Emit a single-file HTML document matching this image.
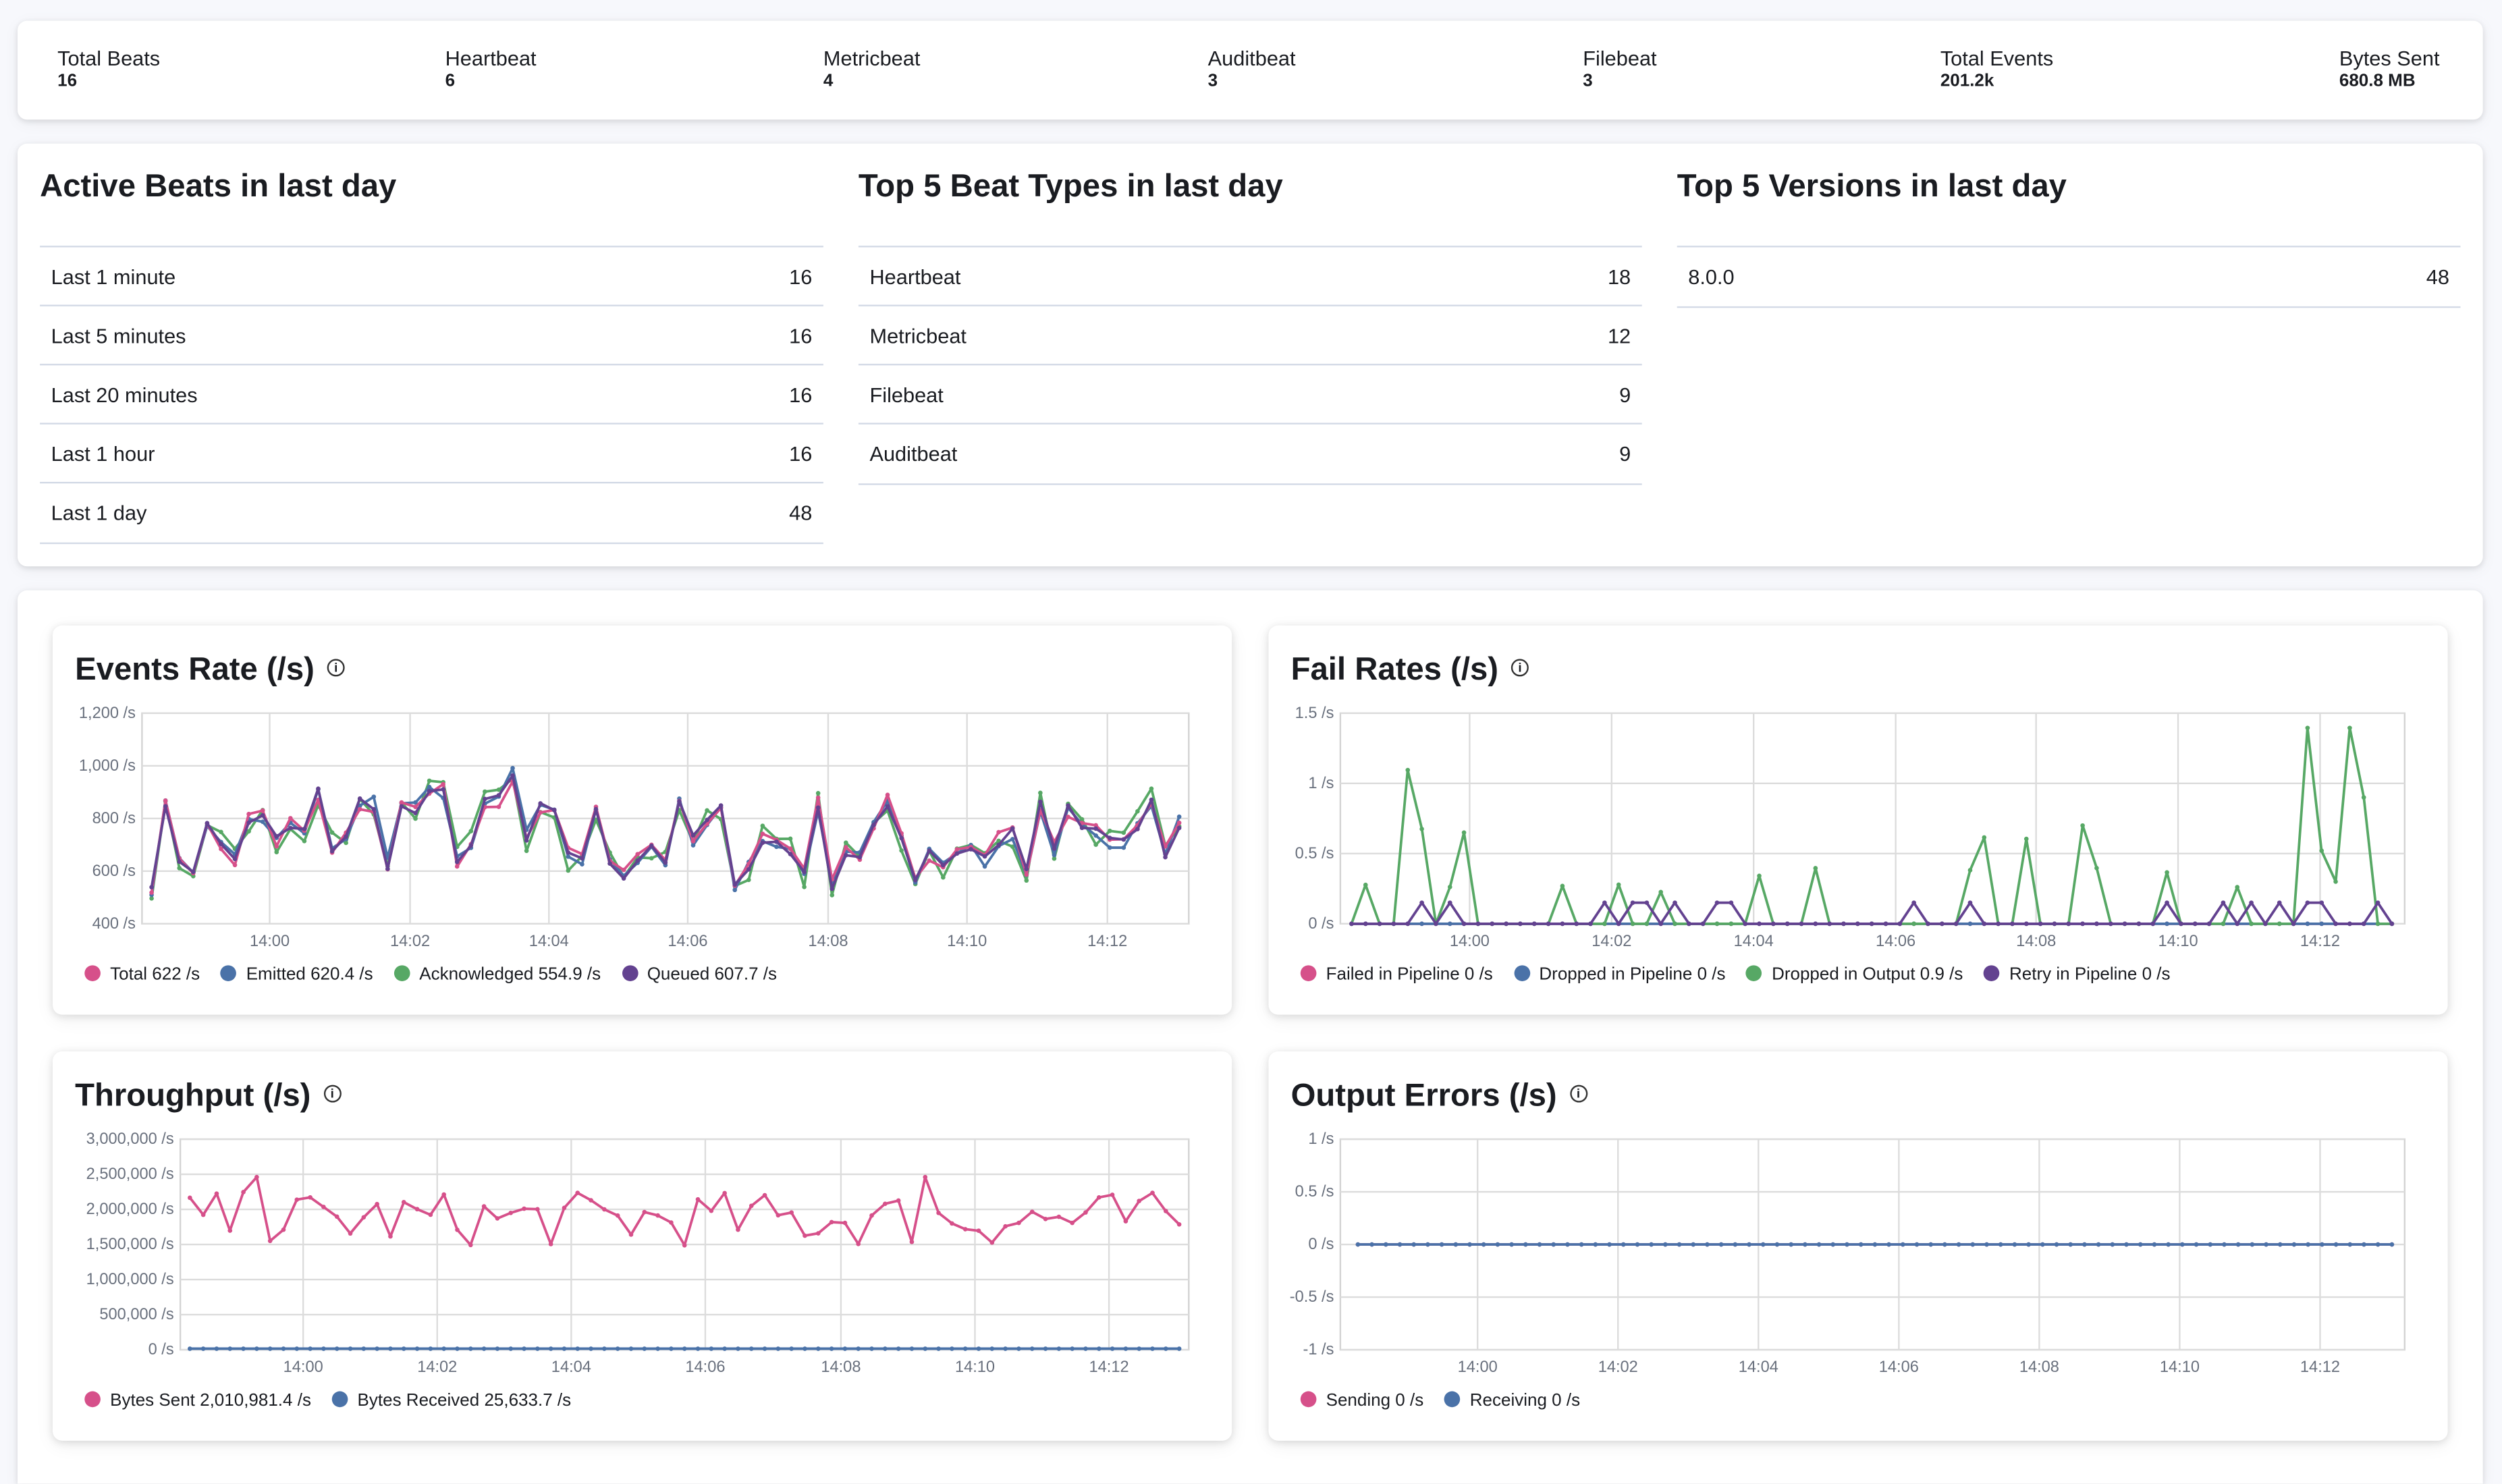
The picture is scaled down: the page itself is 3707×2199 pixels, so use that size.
<!DOCTYPE html>
<html><head><meta charset="utf-8">
<style>
html,body{margin:0;padding:0;width:3707px;height:2160px;overflow:hidden;background:#f7f8fc;}
#w{position:absolute;left:0;top:0;width:1568px;height:914px;transform:scale(2.36416);transform-origin:0 0;font-family:"Liberation Sans",sans-serif;color:#1a1c21;}
.p{position:absolute;background:#fff;border-radius:6px;box-shadow:0 1px 4px rgba(0,0,0,.12),0 2px 10px rgba(0,0,0,.05);}
.s{position:absolute;top:16px;font-size:13px;}
.s b{display:block;font-size:11px;margin-top:1px;}
.col{position:absolute;top:0;width:491px;}
.col h2{margin:0;position:absolute;top:106px;font-size:20px;font-weight:bold;white-space:nowrap;}
.row{position:absolute;left:0;right:0;height:37px;border-top:1px solid #d3dae6;font-size:13px;line-height:37px;}
.row span{position:absolute;left:7px}.row i{position:absolute;right:7px;font-style:normal}
.card{position:absolute;background:#fff;border-radius:6px;box-shadow:0 1px 5px rgba(0,0,0,.12),0 3px 12px rgba(0,0,0,.06);}
.card h3{position:absolute;left:14px;top:17px;margin:0;font-size:20px;font-weight:bold;white-space:nowrap;}
.card h3 .ic{display:inline-block;width:9px;height:9px;border:1px solid #333;border-radius:50%;font-size:8px;line-height:9px;text-align:center;vertical-align:middle;margin-left:8px;font-weight:bold;position:relative;top:-2px}
svg text{font-family:"Liberation Sans",sans-serif;font-size:10px;fill:#69707d}
.lg{position:absolute;top:213px;left:20px;font-size:11px;white-space:nowrap}
.lg span{margin-right:13px}.lg span:before{content:"";display:inline-block;width:10px;height:10px;border-radius:50%;background:var(--c);margin-right:6px;vertical-align:-1px}
</style></head><body><div id="w">
<div class="p" style="left:11px;top:13px;width:1545px;height:62px">
<div class="s" style="left:25px">Total Beats<b>16</b></div>
<div class="s" style="left:268px">Heartbeat<b>6</b></div>
<div class="s" style="left:505px">Metricbeat<b>4</b></div>
<div class="s" style="left:746px">Auditbeat<b>3</b></div>
<div class="s" style="left:981px">Filebeat<b>3</b></div>
<div class="s" style="left:1205px">Total Events<b>201.2k</b></div>
<div class="s" style="left:1455px">Bytes Sent<b>680.8 MB</b></div>
</div>
<div class="p" style="left:11px;top:90px;width:1545px;height:265px">
<div class="col" style="left:14px;top:-90px"><h2>Active Beats in last day</h2>
<div class="row" style="top:154px"><span>Last 1 minute</span><i>16</i></div>
<div class="row" style="top:191px"><span>Last 5 minutes</span><i>16</i></div>
<div class="row" style="top:228px"><span>Last 20 minutes</span><i>16</i></div>
<div class="row" style="top:265px"><span>Last 1 hour</span><i>16</i></div>
<div class="row" style="top:302px;border-bottom:1px solid #d3dae6"><span>Last 1 day</span><i>48</i></div></div>
<div class="col" style="left:527px;top:-90px"><h2>Top 5 Beat Types in last day</h2>
<div class="row" style="top:154px"><span>Heartbeat</span><i>18</i></div>
<div class="row" style="top:191px"><span>Metricbeat</span><i>12</i></div>
<div class="row" style="top:228px"><span>Filebeat</span><i>9</i></div>
<div class="row" style="top:265px;border-bottom:1px solid #d3dae6"><span>Auditbeat</span><i>9</i></div></div>
<div class="col" style="left:1040px;top:-90px"><h2>Top 5 Versions in last day</h2>
<div class="row" style="top:154px;border-bottom:1px solid #d3dae6"><span>8.0.0</span><i>48</i></div></div>
</div>
<div class="p" style="left:11px;top:370px;width:1545px;height:560px;border-radius:6px 6px 0 0"></div>

<div class="card" style="left:33px;top:392px;width:739px;height:244px"><h3>Events Rate (/s)<span class="ic">i</span></h3>
<svg id="c1" style="position:absolute;left:0;top:0" width="739" height="244"></svg>
<div class="lg"><span style="--c:#d6508a">Total 622 /s</span><span style="--c:#4a72a8">Emitted 620.4 /s</span><span style="--c:#57a865">Acknowledged 554.9 /s</span><span style="--c:#634290">Queued 607.7 /s</span></div></div>

<div class="card" style="left:795px;top:392px;width:739px;height:244px"><h3>Fail Rates (/s)<span class="ic">i</span></h3>
<svg id="c2" style="position:absolute;left:0;top:0" width="739" height="244"></svg>
<div class="lg"><span style="--c:#d6508a">Failed in Pipeline 0 /s</span><span style="--c:#4a72a8">Dropped in Pipeline 0 /s</span><span style="--c:#57a865">Dropped in Output 0.9 /s</span><span style="--c:#634290">Retry in Pipeline 0 /s</span></div></div>

<div class="card" style="left:33px;top:659px;width:739px;height:244px"><h3>Throughput (/s)<span class="ic">i</span></h3>
<svg id="c3" style="position:absolute;left:0;top:0" width="739" height="244"></svg>
<div class="lg"><span style="--c:#d6508a">Bytes Sent 2,010,981.4 /s</span><span style="--c:#4a72a8">Bytes Received 25,633.7 /s</span></div></div>

<div class="card" style="left:795px;top:659px;width:739px;height:244px"><h3>Output Errors (/s)<span class="ic">i</span></h3>
<svg id="c4" style="position:absolute;left:0;top:0" width="739" height="244"></svg>
<div class="lg"><span style="--c:#d6508a">Sending 0 /s</span><span style="--c:#4a72a8">Receiving 0 /s</span></div></div>
</div>
<script>
var seed=7;function r(){seed=(seed*16807)%2147483647;return (seed-1)/2147483646;}
var NS="http://www.w3.org/2000/svg";
function el(s,t,a){var e=document.createElementNS(NS,t);for(var k in a)e.setAttribute(k,a[k]);s.appendChild(e);return e;}
function chart(id,x0,x1,y0,y1,ylabels,xs,series,xStart,xEnd){
 var s=document.getElementById(id);
 el(s,'rect',{x:x0,y:y0,width:x1-x0,height:y1-y0,fill:'none',stroke:'#d3d3d3','stroke-width':1});
 ylabels.forEach(function(l,i){var y=y0+(y1-y0)*i/(ylabels.length-1);el(s,'line',{x1:x0,x2:x1,y1:y,y2:y,stroke:'#dcdcdc'});var t=el(s,'text',{x:x0-4,y:y+3,'text-anchor':'end'});t.textContent=l;});
 xs.forEach(function(x,i){el(s,'line',{x1:x,x2:x,y1:y0,y2:y1,stroke:'#dcdcdc'});var t=el(s,'text',{x:x,y:y1+14,'text-anchor':'middle'});t.textContent=['14:00','14:02','14:04','14:06','14:08','14:10','14:12'][i];});
 series.forEach(function(sr){var n=sr.v.length,pts=[];for(var i=0;i<n;i++){var x=xStart+(xEnd-xStart)*i/(n-1),y=y0+(y1-y0)*(1-sr.v[i]);pts.push(x.toFixed(1)+','+y.toFixed(1));el(s,'circle',{cx:x,cy:y,r:1.4,fill:sr.c});}
 el(s,'polyline',{points:pts.join(' '),fill:'none',stroke:sr.c,'stroke-width':1.6,'stroke-linejoin':'round'});});
}
var N=75,base=[];for(var i=0;i<N;i++){var t=i/N;base.push(0.38+(r()-0.5)*0.45+(t>0.15&&t<0.3?0.1:0));}
base[26]=0.72;base[25]=0.6;base[20]=0.62;base[19]=0.55;
function jit(a,k){return a.map(function(v){return Math.max(0.05,Math.min(0.98,v+(r()-0.5)*k));});}
chart('c1',56,712,55,187,['1,200 /s','1,000 /s','800 /s','600 /s','400 /s'],[136,224,311,398,486,573,661],
 [{c:'#57a865',v:jit(base,0.14)},{c:'#4a72a8',v:jit(base,0.07)},{c:'#d6508a',v:jit(base,0.09)},{c:'#634290',v:jit(base,0.05)}],62,706);
var g=[],p=[],z=[];for(var i=0;i<N;i++){g.push(r()<0.3?0.15+r()*0.45:0);p.push(r()<0.22?0.1:0);z.push(0);}
g[4]=0.73;g[5]=0.45;g[68]=0.93;g[71]=0.93;g[70]=0.2;g[72]=0.6;
chart('c2',45,712,55,187,['1.5 /s','1 /s','0.5 /s','0 /s'],[126,215,304,393,481,570,659],
 [{c:'#d6508a',v:z},{c:'#4a72a8',v:z},{c:'#57a865',v:g},{c:'#634290',v:p}],52,704);
var b=[];for(var i=0;i<N;i++)b.push(0.62+(r()-0.5)*0.26);b[5]=0.82;b[55]=0.82;
var zb=[];for(var i=0;i<N;i++)zb.push(0.005);
chart('c3',80,712,55,187,['3,000,000 /s','2,500,000 /s','2,000,000 /s','1,500,000 /s','1,000,000 /s','500,000 /s','0 /s'],[157,241,325,409,494,578,662],
 [{c:'#d6508a',v:b},{c:'#4a72a8',v:zb}],86,706);
var h=[];for(var i=0;i<N;i++)h.push(0.5);
chart('c4',45,712,55,187,['1 /s','0.5 /s','0 /s','-0.5 /s','-1 /s'],[131,219,307,395,483,571,659],
 [{c:'#d6508a',v:h},{c:'#4a72a8',v:h}],56,704);
</script>
</body></html>
